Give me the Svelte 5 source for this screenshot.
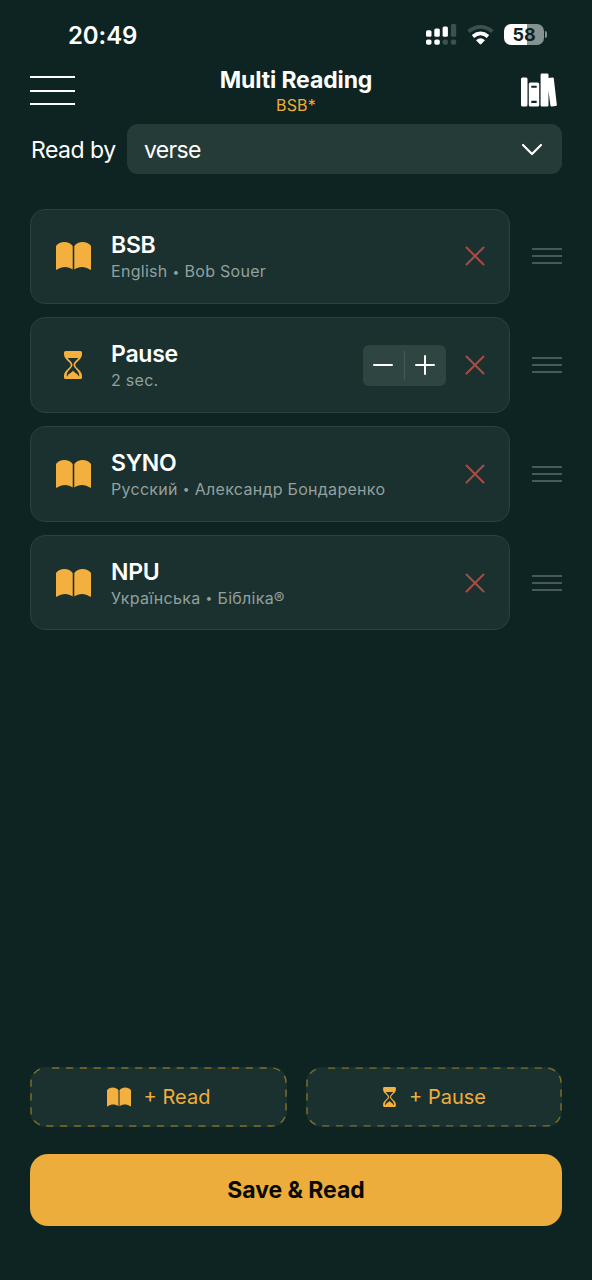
<script lang="ts">
  let mode = 'verse';

  let items = [
    { type: 'read', title: 'BSB', lang: 'English', info: 'Bob Souer' },
    { type: 'pause', title: 'Pause', sec: 2 },
    { type: 'read', title: 'SYNO', lang: 'Русский', info: 'Александр Бондаренко' },
    { type: 'read', title: 'NPU', lang: 'Українська', info: 'Бібліка®' }
  ];

  function removeItem(i: number) {
    items = items.filter((_, index) => index !== i);
  }

  function changePause(i: number, diff: number) {
    items[i].sec = Math.max(1, items[i].sec + diff);
  }

  function addRead() {
    items = [...items, { type: 'read', title: 'BSB', lang: 'English', info: 'Bob Souer' }];
  }

  function addPause() {
    items = [...items, { type: 'pause', title: 'Pause', sec: 2 }];
  }
</script>

{#snippet book()}
  <svg class="book" viewBox="0 0 35 28">
    <path d="M0 4C3.500-1.200 13-1.400 16.700 4V27.600C12.500 24 5.500 24 1.300 27.600Q0 28.200 0 26.900Z" />
    <path d="M35 4C31.500-1.200 22-1.400 18.300 4V27.600C22.500 24 29.500 24 33.700 27.600Q35 28.200 35 26.900Z" />
  </svg>
{/snippet}

{#snippet hourglass()}
  <svg class="hourglass" viewBox="0 0 18 28">
    <path
      fill-rule="evenodd"
      d="M1.600 0H16.400Q18 0 18 1.600V3.500C18 8.500 11.200 11 11.200 14S18 19.500 18 24.500V26.400Q18 28 16.400 28H1.600Q0 28 0 26.400V24.500C0 19.500 6.800 17 6.800 14S0 8.500 0 3.500V1.600Q0 0 1.600 0ZM3.800 7H14.200C12.800 9.600 9.500 11 9.500 14S15.200 19.500 15.200 24.200V25.200H14.500C14 22.500 10.800 22.200 9 19.700C7.200 22.200 4 22.500 3.500 25.200H2.800V24.200C2.800 19.500 8.500 17 8.500 14S5.200 9.600 3.800 7Z"
    />
  </svg>
{/snippet}

{#snippet dashes()}
  <svg class="dashes" viewBox="0 0 257 60">
    <rect x="1" y="1" width="255" height="58" rx="14.500" />
  </svg>
{/snippet}

<div class="screen">
  <div class="status">
    <span class="time">20:49</span>
    <svg class="signal" viewBox="0 0 31 21">
      <rect x="0" y="6.200" width="5.500" height="6.500" rx="1.500" />
      <rect x="8.300" y="4.500" width="5.500" height="8.200" rx="1.500" />
      <rect x="16.600" y="2.500" width="5.300" height="10.200" rx="1.500" />
      <rect class="dim" x="24.900" y="0" width="5.300" height="12.700" rx="1.500" />
      <rect x="0" y="15.500" width="5.500" height="5.300" rx="1.800" />
      <rect x="8.300" y="15.500" width="5.500" height="5.300" rx="1.800" />
      <rect class="dim" x="16.600" y="15.500" width="5.300" height="5.300" rx="1.800" />
      <rect class="dim" x="24.900" y="15.500" width="5.300" height="5.300" rx="1.800" />
    </svg>
    <svg class="wifi" viewBox="0 0 27 20">
      <path class="dim" d="M1.500 6.600Q13.500-2.800 25.500 6.600" />
      <path d="M6 11.400Q13.500 5.400 21 11.400" />
      <path class="dot" d="M9 15.200Q13.500 11.500 18 15.200L14.300 19Q13.500 19.800 12.700 19Z" />
    </svg>
    <div class="battery"><span>58</span></div>
    <i class="tip"></i>
  </div>

  <header>
    <button class="menu" aria-label="Menu"><i></i><i></i><i></i></button>
    <div class="heading">
      <h1>Multi Reading</h1>
      <p>BSB*</p>
    </div>
    <button class="library" aria-label="Library">
      <svg viewBox="0 0 36 34">
        <rect x="0" y="4.500" width="6.500" height="29" rx="1.500" />
        <path fill-rule="evenodd" d="M9.500 9.500h7q1.700 0 1.700 1.500v21q0 1.500-1.700 1.500h-7q-1.700 0-1.700-1.500V11q0-1.500 1.700-1.500ZM10.300 12.800v2h5.400v-2ZM10.300 27.800v2.200h5.400v-2.200Z" />
        <path d="M20.900.5h5.300q1.300 0 1.300 1.200V5l4-.6q1.200-.1 1.300 1l3 26.300q.1 1.200-1.100 1.400l-4 .4q-1.100.1-1.300-1L27.500 18V32.300q0 1.200-1.300 1.200h-5.300q-1.300 0-1.300-1.200V1.700Q19.600.5 20.900.5Z" />
      </svg>
    </button>
  </header>

  <div class="read-by">
    <span class="label">Read by</span>
    <button class="select">
      <span>{mode}</span>
      <svg viewBox="0 0 22 13"><path d="M2 2L11 11L20 2" /></svg>
    </button>
  </div>

  <div class="list">
    {#each items as item, i}
      <div class="row">
        <div class="card">
          <div class="icon">
            {#if item.type === 'read'}
              {@render book()}
            {:else}
              {@render hourglass()}
            {/if}
          </div>
          <div class="text">
            <h2>{item.title}</h2>
            {#if item.type === 'read'}
              <p>{item.lang} <span class="dot">•</span> {item.info}</p>
            {:else}
              <p>{item.sec} sec.</p>
            {/if}
          </div>
          {#if item.type === 'pause'}
            <div class="stepper">
              <button aria-label="Less" on:click={() => changePause(i, -1)}>
                <svg viewBox="0 0 20 20"><path d="M1 10H19" /></svg>
              </button>
              <i></i>
              <button aria-label="More" on:click={() => changePause(i, 1)}>
                <svg viewBox="0 0 20 20"><path d="M1 10H19M10 1V19" /></svg>
              </button>
            </div>
          {/if}
          <button class="remove" aria-label="Remove" on:click={() => removeItem(i)}>
            <svg viewBox="0 0 20 20"><path d="M1.500 1.500L18.500 18.500M18.500 1.500L1.500 18.500" /></svg>
          </button>
        </div>
        <div class="handle"><i></i><i></i><i></i></div>
      </div>
    {/each}
  </div>

  <div class="add">
    <button on:click={addRead}>
      {@render dashes()}
      {@render book()}
      <span>+ Read</span>
    </button>
    <button class="add-pause" on:click={addPause}>
      {@render dashes()}
      {@render hourglass()}
      <span>+ Pause</span>
    </button>
  </div>

  <button class="save">Save &amp; Read</button>
</div>

<style>
  :global(body) {
    margin: 0;
    background: #0d2422;
  }

  .screen {
    box-sizing: border-box;
    height: 1280px;
    padding: 0 30px 54px;
    display: flex;
    flex-direction: column;
    background: #0d2422;
    color: #fff;
    font-family: Inter, 'Liberation Sans', sans-serif;
  }

  button {
    margin: 0;
    padding: 0;
    border: none;
    background: none;
    color: inherit;
    font: inherit;
    cursor: pointer;
  }

  svg {
    display: block;
    flex: none;
  }

  h1, h2, p {
    margin: 0;
  }

  i {
    display: block;
  }

  .status {
    height: 60px;
    padding: 9px 15px 0 38px;
    box-sizing: border-box;
    display: flex;
    align-items: center;
  }

  .time {
    flex: 1;
    padding-top: 2px;
    font-size: 24px;
    font-weight: 600;
    letter-spacing: -0.1px;
  }

  .signal {
    width: 31px;
    height: 21px;
    fill: #fff;
  }

  .signal .dim {
    fill: #3d504e;
  }

  .wifi {
    width: 27px;
    height: 20px;
    margin: 0 10px;
    fill: none;
    stroke: #fff;
    stroke-width: 3.8;
  }

  .wifi .dim {
    stroke: #3d504e;
  }

  .wifi .dot {
    fill: #fff;
    stroke: none;
  }

  .battery {
    width: 40px;
    height: 21px;
    border-radius: 7px;
    background: linear-gradient(90deg, #fff 57%, #869290 57%);
    color: #0d2422;
    font-size: 18px;
    font-weight: 700;
    line-height: 21px;
    text-align: center;
  }

  .tip {
    width: 2px;
    height: 7px;
    margin-left: 1px;
    border-radius: 0 3px 3px 0;
    background: #869290;
  }

  header {
    height: 64px;
    display: flex;
    justify-content: space-between;
  }

  .menu {
    width: 45px;
    height: 29px;
    margin-top: 16px;
    display: flex;
    flex-direction: column;
    justify-content: space-between;
  }

  .menu i {
    width: 45px;
    height: 2px;
    background: #fff;
  }

  .heading {
    padding-top: 6px;
    text-align: center;
  }

  h1 {
    font-size: 23px;
    font-weight: 700;
    line-height: 28px;
    letter-spacing: -0.12px;
  }

  .heading p {
    color: #eead3d;
    font-size: 16px;
    line-height: 22px;
    letter-spacing: 0.2px;
  }

  .library {
    width: 45px;
    height: 34px;
    margin-top: 13px;
    display: flex;
    justify-content: flex-end;
    padding-right: 4.500px;
    box-sizing: border-box;
  }

  .library svg {
    width: 36px;
    height: 34px;
    fill: #fff;
  }

  .read-by {
    display: flex;
    align-items: center;
    justify-content: space-between;
    font-size: 23px;
    letter-spacing: -0.5px;
  }

  .read-by span {
    padding-top: 2px;
  }

  .label {
    padding-left: 1px;
  }

  .select {
    width: 435px;
    height: 50px;
    padding: 0 19px 0 17px;
    box-sizing: border-box;
    display: flex;
    align-items: center;
    justify-content: space-between;
    border-radius: 11px;
    background: #253b38;
    letter-spacing: -0.7px;
  }

  .select svg {
    width: 22px;
    height: 13px;
    fill: none;
    stroke: #fff;
    stroke-width: 2.2;
    stroke-linecap: round;
    stroke-linejoin: round;
  }

  .list {
    flex: 1;
    padding-top: 34.500px;
    display: flex;
    flex-direction: column;
    gap: 13.300px;
  }

  .row {
    display: flex;
    align-items: center;
    justify-content: space-between;
  }

  .card {
    width: 479.500px;
    height: 95.500px;
    padding: 0 24px;
    box-sizing: border-box;
    display: flex;
    align-items: center;
    border: 1px solid #2b413e;
    border-radius: 15px;
    background: #1a312f;
  }

  .icon {
    width: 36px;
    margin-right: 20px;
    display: flex;
    justify-content: center;
  }

  .book {
    width: 35px;
    height: 28px;
    fill: #f3b03e;
  }

  .hourglass {
    width: 18px;
    height: 28px;
    fill: #f3b03e;
  }

  .text {
    flex: 1;
    padding-top: 2px;
  }

  h2 {
    font-size: 23px;
    font-weight: 600;
    line-height: 28px;
    letter-spacing: -0.25px;
  }

  .text p {
    color: #93a09e;
    font-size: 16px;
    line-height: 24px;
    letter-spacing: 0.28px;
    white-space: nowrap;
  }

  .text .dot {
    display: inline-block;
    width: 7.500px;
    font-size: 12px;
    line-height: 16px;
    text-align: center;
    vertical-align: 1.500px;
  }

  .stepper {
    width: 83px;
    height: 41px;
    margin-right: 19px;
    display: flex;
    align-items: center;
    border-radius: 6px;
    background: #2e4542;
  }

  .stepper button {
    flex: 1;
    display: flex;
    justify-content: center;
  }

  .stepper i {
    width: 1px;
    height: 29px;
    background: #445a57;
  }

  .stepper svg {
    width: 20px;
    height: 20px;
    stroke: #fff;
    stroke-width: 2;
    stroke-linecap: round;
  }

  .remove svg {
    width: 20px;
    height: 20px;
    stroke: #aa4b44;
    stroke-width: 2;
    stroke-linecap: round;
  }

  .handle {
    width: 30px;
    height: 16px;
    display: flex;
    flex-direction: column;
    justify-content: space-between;
  }

  .handle i {
    height: 2px;
    background: #465a59;
  }

  .add {
    display: flex;
    justify-content: space-between;
    margin-bottom: 27px;
  }

  .add button {
    position: relative;
    width: 257px;
    height: 60px;
    display: flex;
    align-items: center;
    justify-content: center;
    gap: 13px;
    border-radius: 15px;
    background: #1a312f;
    color: #eead3d;
    font-size: 20px;
  }

  .add .book {
    width: 24px;
    height: 20px;
  }

  .add .hourglass {
    width: 13px;
    height: 20px;
  }

  .add .add-pause {
    width: 256px;
    padding-left: 1px;
  }

  .dashes {
    position: absolute;
    inset: 0;
    width: 100%;
    height: 60px;
    fill: none;
    stroke: #806f27;
    stroke-width: 1.4;
    stroke-dasharray: 7.2 6.63;
    stroke-dashoffset: 7.2;
  }

  .save {
    height: 72px;
    border-radius: 18px;
    background: #edad3d;
    color: #0a0a05;
    font-size: 23px;
    font-weight: 700;
    letter-spacing: -0.05px;
  }
</style>
